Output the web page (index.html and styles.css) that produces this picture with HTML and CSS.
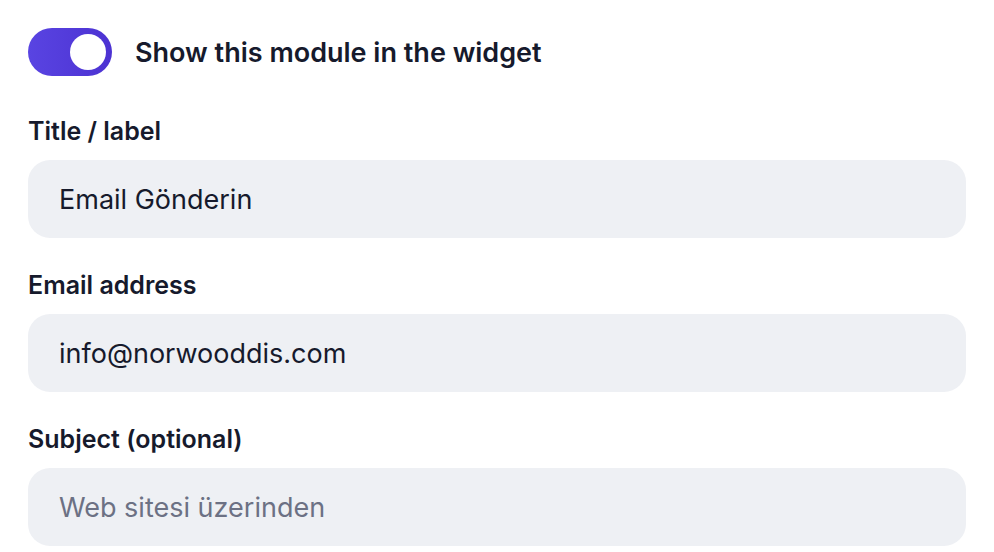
FILE: index.html
```html
<!DOCTYPE html>
<html lang="en">
<head>
<meta charset="utf-8">
<title>Email module</title>
<link rel="stylesheet" href="styles.css">
</head>
<body>
<div class="panel">
  <label class="toggle-row">
    <span class="switch"><span class="knob"></span></span>
    <span class="toggle-text">Show this module in the widget</span>
  </label>
  <div class="field">
    <div class="field-label">Title / label</div>
    <input class="field-input" type="text" value="Email Gönderin">
  </div>
  <div class="field">
    <div class="field-label">Email address</div>
    <input class="field-input" type="text" value="info@norwooddis.com">
  </div>
  <div class="field">
    <div class="field-label">Subject (optional)</div>
    <input class="field-input" type="text" placeholder="Web sitesi üzerinden">
  </div>
</div>
</body>
</html>
```

FILE: styles.css
```css
html, body {
  margin: 0;
  padding: 0;
  background: #ffffff;
}
body {
  font-family: Inter, "Noto Sans", sans-serif;
  color: #161a2c;
}
.panel {
  padding: 28px 28px 0 28px;
  display: flex;
  flex-direction: column;
}
.toggle-row {
  display: flex;
  align-items: center;
  gap: 23px;
  height: 48px;
}
.switch {
  width: 84px;
  height: 48px;
  border-radius: 24px;
  background: linear-gradient(90deg, #5944e2, #4c32d2);
  display: flex;
  align-items: center;
  justify-content: flex-end;
  padding-right: 6px;
  box-sizing: border-box;
}
.knob {
  width: 36px;
  height: 36px;
  border-radius: 50%;
  background: #ffffff;
}
.toggle-text {
  font-size: 27px;
  font-weight: 600;
}
.field {
  display: flex;
  flex-direction: column;
  gap: 15px;
  margin-top: 41px;
}
.field + .field {
  margin-top: 33px;
}
.field-label {
  font-size: 25px;
  font-weight: 600;
  line-height: 28px;
}
.field-input {
  box-sizing: border-box;
  width: 938px;
  height: 78px;
  border: none;
  outline: none;
  border-radius: 22px;
  background: #eef0f4;
  padding: 0 31px;
  font-family: Inter, "Noto Sans", sans-serif;
  font-size: 27px;
  color: #161a2c;
}
.field-input::placeholder {
  color: #6c7184;
  opacity: 1;
}
```
